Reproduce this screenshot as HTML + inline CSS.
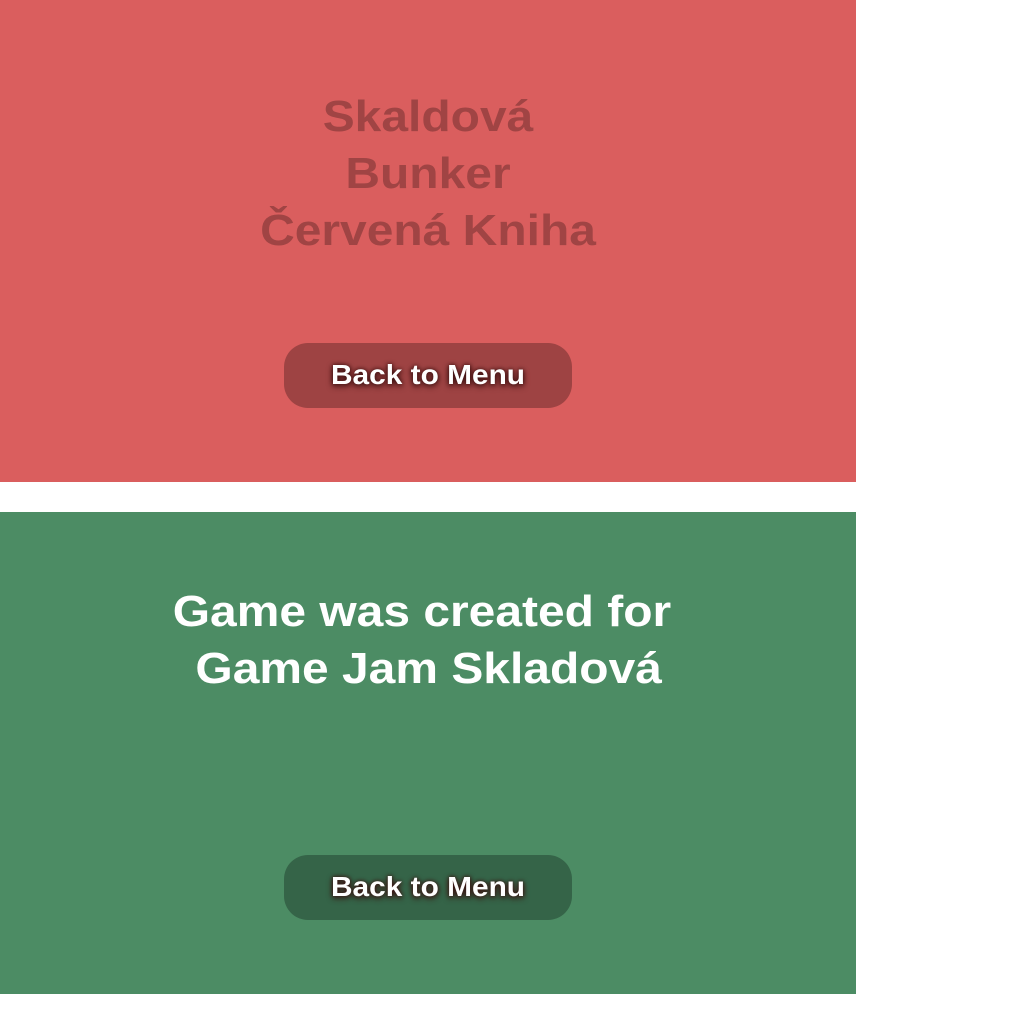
<!DOCTYPE html>
<html><head><style>
body{margin:0;width:1024px;height:1024px;background:#fff;position:relative;font-family:"Liberation Sans",sans-serif;font-weight:bold;overflow:hidden}
.p{position:absolute;left:0;width:856px;height:482px}
.t{position:absolute;left:0;width:856px;text-align:center;font-size:44px;line-height:57px;white-space:pre;transform:scaleX(1.09)}
.b{position:absolute;left:284px;width:288px;height:65px;border-radius:24px;color:#fff;font-size:28px;text-align:center;line-height:63px;text-shadow:0 0 4px #3a1010,0 2px 6px #3a1010}
.b span{display:inline-block;transform:scaleX(1.066)}
</style></head><body>
<div class="p" style="top:0;background:#da5e5e">
 <div class="t" style="top:88px;color:#a04444">Skaldová
Bunker
Červená Kniha</div>
 <div class="b" style="top:343px;background:#9e4343"><span>Back to Menu</span></div>
</div>
<div class="p" style="top:512px;background:#4c8c64">
 <div class="t" style="top:71px;color:#fff;left:-6px">Game was created for
 Game Jam Skladová</div>
 <div class="b" style="top:343px;background:#356448"><span>Back to Menu</span></div>
</div>
</body></html>
